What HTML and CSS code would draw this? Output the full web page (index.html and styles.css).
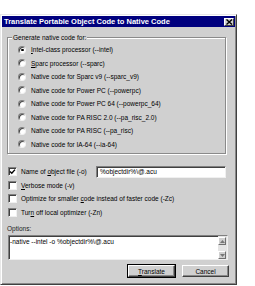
FILE: index.html
```html
<!DOCTYPE html>
<html lang="en">
<head>
    <title>Translate Portable Object Code to Native Code</title>
    <meta charset="UTF-8">
    <link rel="stylesheet" href="styles.css">
</head>
<body>
    <div class="dialog">
        <div class="titlebar">
            <span class="title">Translate Portable Object Code to Native Code</span>
            <span class="close-btn">
                <svg width="7" height="6" viewBox="0 0 7 6"><path d="M0.5 0.5 L6 5.5 M6 0.5 L0.5 5.5" stroke="#000" stroke-width="1.4"/></svg>
            </span>
        </div>

        <div class="content">
            <div class="groupbox">
                <span class="legend">Generate native code for:</span>
                <div class="radio-row"><span class="radio checked"></span><span><u>I</u>ntel-class processor (--intel)</span></div>
                <div class="radio-row"><span class="radio"></span><span><u>S</u>parc processor (--sparc)</span></div>
                <div class="radio-row"><span class="radio"></span><span>Native code for Sparc v9 (--sparc_v9)</span></div>
                <div class="radio-row"><span class="radio"></span><span>Native code for Power PC (--powerpc)</span></div>
                <div class="radio-row"><span class="radio"></span><span>Native code for Power PC 64 (--powerpc_64)</span></div>
                <div class="radio-row"><span class="radio"></span><span>Native code for PA RISC 2.0 (--pa_risc_2.0)</span></div>
                <div class="radio-row"><span class="radio"></span><span>Native code for PA RISC (--pa_risc)</span></div>
                <div class="radio-row"><span class="radio"></span><span>Native code for IA-64 (--ia-64)</span></div>
            </div>

            <div class="check-list">
                <div class="check-row">
                    <span class="checkbox checked">
                        <svg width="7" height="7" viewBox="0 0 7 7"><path d="M1 3.5 L2.8 5.3 L6 1.6" fill="none" stroke="#000" stroke-width="1.4"/></svg>
                    </span>
                    <span class="check-label">Name of <u>o</u>bject file (-o)</span>
                    <span class="text-input">%objectdir%\@.acu</span>
                </div>
                <div class="check-row"><span class="checkbox"></span><span><u>V</u>erbose mode (-v)</span></div>
                <div class="check-row"><span class="checkbox"></span><span>Optimize for smaller <u>c</u>ode instead of faster code (-Zc)</span></div>
                <div class="check-row"><span class="checkbox"></span><span>Tur<u>n</u> off local optimizer (-Zn)</span></div>
            </div>

            <div class="options-label">Options:</div>
            <div class="options-box">
                <span class="options-text">-native --intel -o %objectdir%\@.acu</span>
                <div class="scrollbar">
                    <span class="scroll-btn">
                        <svg width="5" height="3" viewBox="0 0 5 3"><path d="M2.5 0 L5 3 L0 3 Z" fill="#777"/></svg>
                    </span>
                    <span class="scroll-btn">
                        <svg width="5" height="3" viewBox="0 0 5 3"><path d="M0 0 L5 0 L2.5 3 Z" fill="#777"/></svg>
                    </span>
                </div>
            </div>

            <div class="button-row">
                <button class="btn default"><u>T</u>ranslate</button>
                <button class="btn">Cancel</button>
            </div>
        </div>
    </div>
</body>
</html>
```

FILE: styles.css
```css
* {
    margin: 0;
    padding: 0;
    box-sizing: border-box;
}

body {
    background: #ffffff;
    font-family: "Liberation Sans", Arial, sans-serif;
    font-size: 6.5px;
    color: #000;
}

.dialog {
    width: 237px;
    height: 271px;
    margin-top: 14px;
    background: #d0d0d0;
    border: 1px solid;
    border-color: #e8e8e8 #404040 #404040 #e8e8e8;
    box-shadow: inset 1px 1px 0 #ffffff, inset -1px -1px 0 #888;
    padding: 1px;
    display: flex;
    flex-direction: column;
}

.titlebar {
    height: 11px;
    background: #00007e;
    display: flex;
    align-items: center;
    justify-content: space-between;
    padding: 0 1px 0 2px;
}

.title {
    color: #ffffff;
    font-weight: bold;
    font-size: 7.5px;
}

.close-btn {
    width: 10px;
    height: 8px;
    background: #d0d0d0;
    border: 1px solid;
    border-color: #ffffff #404040 #404040 #ffffff;
    display: flex;
    align-items: center;
    justify-content: center;
}

.content {
    flex: 1;
    padding: 0 8px 0 5px;
    display: flex;
    flex-direction: column;
}

.groupbox {
    position: relative;
    margin-top: 10px;
    margin-right: 1px;
    height: 117px;
    border: 1px solid #8a8a8a;
    box-shadow: 1px 1px 0 #ffffff, inset 1px 1px 0 #ffffff;
    padding: 5px 0 0 10px;
}

.legend {
    position: absolute;
    top: -5px;
    left: 4px;
    padding: 0 1px;
    background: #d0d0d0;
    line-height: 9px;
}

.radio-row {
    height: 13.5px;
    display: flex;
    align-items: center;
    gap: 5px;
}

.radio {
    width: 8px;
    height: 8px;
    border-radius: 50%;
    background: #ffffff;
    border: 1px solid;
    border-color: #808080 #f0f0f0 #f0f0f0 #808080;
    box-shadow: inset 1px 1px 0 #404040;
    position: relative;
}

.radio.checked::after {
    content: "";
    position: absolute;
    left: 2px;
    top: 2px;
    width: 2.5px;
    height: 2.5px;
    border-radius: 50%;
    background: #000;
}

.check-list {
    margin-top: 11px;
}

.check-row {
    height: 13.5px;
    display: flex;
    align-items: center;
    gap: 4px;
    padding-left: 1px;
}

.checkbox {
    width: 9px;
    height: 9px;
    background: #ffffff;
    border: 1px solid;
    border-color: #808080 #f0f0f0 #f0f0f0 #808080;
    box-shadow: inset 1px 1px 0 #404040;
    display: flex;
    align-items: center;
    justify-content: center;
}

.check-label {
    width: 71px;
}

.text-input {
    flex: 1;
    height: 12px;
    margin-right: 1px;
    background: #ffffff;
    border: 1px solid;
    border-color: #808080 #f0f0f0 #f0f0f0 #808080;
    box-shadow: inset 1px 1px 0 #404040;
    padding: 0 3px;
    display: flex;
    align-items: center;
}

.options-label {
    margin-top: 5px;
    line-height: 9px;
    color: #222;
}

.options-box {
    margin-top: 2px;
    margin-left: 1px;
    margin-right: -1px;
    height: 25px;
    background: #ffffff;
    border: 1px solid;
    border-color: #808080 #f0f0f0 #f0f0f0 #808080;
    box-shadow: inset 1px 1px 0 #404040;
    display: flex;
    justify-content: space-between;
}

.options-text {
    padding: 2px 0 0 1px;
    line-height: 8px;
}

.scrollbar {
    width: 9px;
    background: #e4e4e4;
    display: flex;
    flex-direction: column;
    justify-content: space-between;
    padding: 1px 1px 0 0;
}

.scroll-btn {
    height: 8px;
    background: #d0d0d0;
    border: 1px solid;
    border-color: #ffffff #707070 #707070 #ffffff;
    display: flex;
    align-items: center;
    justify-content: center;
}

.button-row {
    margin-top: 5px;
    margin-right: -2px;
    display: flex;
    justify-content: flex-end;
    gap: 7px;
}

.btn {
    width: 47px;
    height: 12px;
    font-family: "Liberation Sans", Arial, sans-serif;
    font-size: 6.5px;
    color: #000;
    background: #d0d0d0;
    border: 1px solid;
    border-color: #ffffff #404040 #404040 #ffffff;
    box-shadow: inset -1px -1px 0 #888;
}

.btn.default {
    outline: 1px solid #000;
    outline-offset: 0;
}
```
